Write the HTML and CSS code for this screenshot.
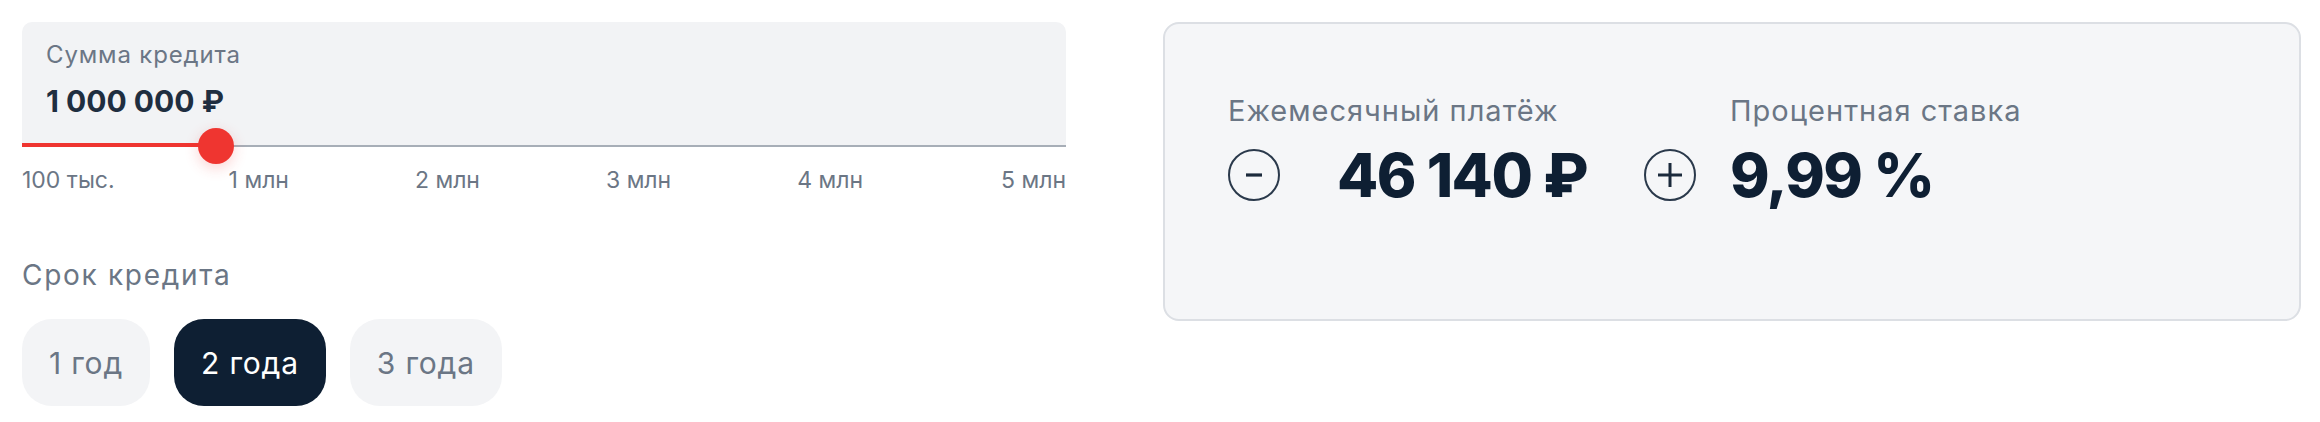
FILE: index.html
```html
<!DOCTYPE html>
<html lang="ru">
<head>
<meta charset="utf-8">
<title>Кредитный калькулятор</title>
<link rel="stylesheet" href="styles.css">
</head>
<body>
<div class="page">
  <section class="params">
    <div class="amount">
      <div class="amount-body">
        <div class="amount-label">Сумма кредита</div>
        <div class="amount-value">1 000 000 ₽</div>
      </div>
      <div class="slider">
        <div class="slider-fill" style="width: 194px"></div>
        <div class="slider-thumb" style="left: 194px"></div>
      </div>
    </div>
    <div class="ticks">
      <span>100 тыс.</span>
      <span class="tick-pull">1 млн</span>
      <span>2 млн</span>
      <span>3 млн</span>
      <span>4 млн</span>
      <span class="tick-push">5 млн</span>
    </div>
    <div class="term-label">Срок кредита</div>
    <div class="term-options">
      <button class="term">1 год</button>
      <button class="term term-active">2 года</button>
      <button class="term">3 года</button>
    </div>
  </section>

  <section class="card">
    <div class="metrics">
      <div class="metric">
        <div class="metric-label">Ежемесячный платёж</div>
        <div class="stepper">
          <button class="step" aria-label="Уменьшить">
            <svg width="52" height="52" viewBox="0 0 52 52"><circle cx="26" cy="26" r="25" fill="none" stroke="#2a394b" stroke-width="2"/><line x1="18" y1="26" x2="34" y2="26" stroke="#1b2a3c" stroke-width="3.2"/></svg>
          </button>
          <span class="metric-value">46 140 ₽</span>
          <button class="step" aria-label="Увеличить">
            <svg width="52" height="52" viewBox="0 0 52 52"><circle cx="26" cy="26" r="25" fill="none" stroke="#2a394b" stroke-width="2"/><line x1="14" y1="26" x2="38" y2="26" stroke="#1b2a3c" stroke-width="3"/><line x1="26" y1="14" x2="26" y2="38" stroke="#1b2a3c" stroke-width="3"/></svg>
          </button>
        </div>
      </div>
      <div class="metric">
        <div class="metric-label">Процентная ставка</div>
        <div class="metric-row">
          <span class="metric-value">9,99 %</span>
        </div>
      </div>
    </div>
  </section>
</div>
</body>
</html>
```

FILE: styles.css
```css
* {
  box-sizing: border-box;
}

body {
  margin: 0;
  background: #ffffff;
  font-family: "Inter", "Noto Sans", "Liberation Sans", sans-serif;
  color: #0e1f33;
}

.page {
  display: grid;
  grid-template-columns: 1044px 1138px;
  column-gap: 97px;
  align-items: start;
  padding: 22px 0 0 22px;
}

/* ---------- left column ---------- */

.amount {
  background: #f2f3f5;
  border-radius: 10px 10px 0 0;
}

.amount-body {
  padding: 15px 24px 24px;
}

.amount-label {
  font-size: 24px;
  line-height: 36px;
  letter-spacing: 0.85px;
  color: #6b7685;
}

.amount-value {
  margin-top: 8px;
  font-size: 30px;
  line-height: 40px;
  font-weight: 700;
  color: #1f2e40;
}

.slider {
  position: relative;
  height: 2px;
  background: #a7aeb7;
}

.slider-fill {
  position: absolute;
  left: 0;
  bottom: 0;
  height: 4px;
  background: #ef3530;
}

.slider-thumb {
  position: absolute;
  top: 1px;
  width: 36px;
  height: 36px;
  border-radius: 50%;
  background: #ef3530;
  transform: translate(-50%, -50%);
  box-shadow: 0 4px 14px rgba(239, 53, 48, 0.22);
}

.ticks {
  display: flex;
  justify-content: space-between;
  margin-top: 16px;
  font-size: 23px;
  line-height: 34px;
  color: #6b7685;
}

.tick-pull {
  margin-left: -12px;
}

.tick-push {
  margin-left: 12px;
}

.term-label {
  margin-top: 58px;
  font-size: 28px;
  line-height: 40px;
  letter-spacing: 1.7px;
  color: #6b7685;
}

.term-options {
  display: flex;
  gap: 24px;
  margin-top: 24px;
}

.term {
  height: 87px;
  padding: 0 27px;
  border: none;
  border-radius: 30px;
  background: #f3f4f6;
  color: #6b7685;
  font-family: inherit;
  font-size: 30px;
  line-height: 1;
  letter-spacing: 0.8px;
}

.term-active {
  background: #0e1f33;
  color: #ffffff;
}

/* ---------- right card ---------- */

.card {
  height: 299px;
  padding: 66px 63px 0;
  background: #f5f6f8;
  border: 2px solid #dcdfe4;
  border-radius: 16px;
}

.metrics {
  display: flex;
  align-items: flex-start;
  gap: 34px;
}

.metric-label {
  font-size: 29px;
  line-height: 42px;
  letter-spacing: 1px;
  color: #6b7685;
}

.stepper,
.metric-row {
  display: flex;
  align-items: center;
  height: 72px;
  margin-top: 7px;
}

.stepper {
  gap: 57px;
}

.step {
  display: block;
  width: 52px;
  height: 52px;
  padding: 0;
  border: none;
  background: none;
}

.step svg {
  display: block;
}

.metric-value {
  font-size: 60px;
  line-height: 72px;
  font-weight: 800;
  letter-spacing: -1.5px;
  color: #0e1f33;
}
```
